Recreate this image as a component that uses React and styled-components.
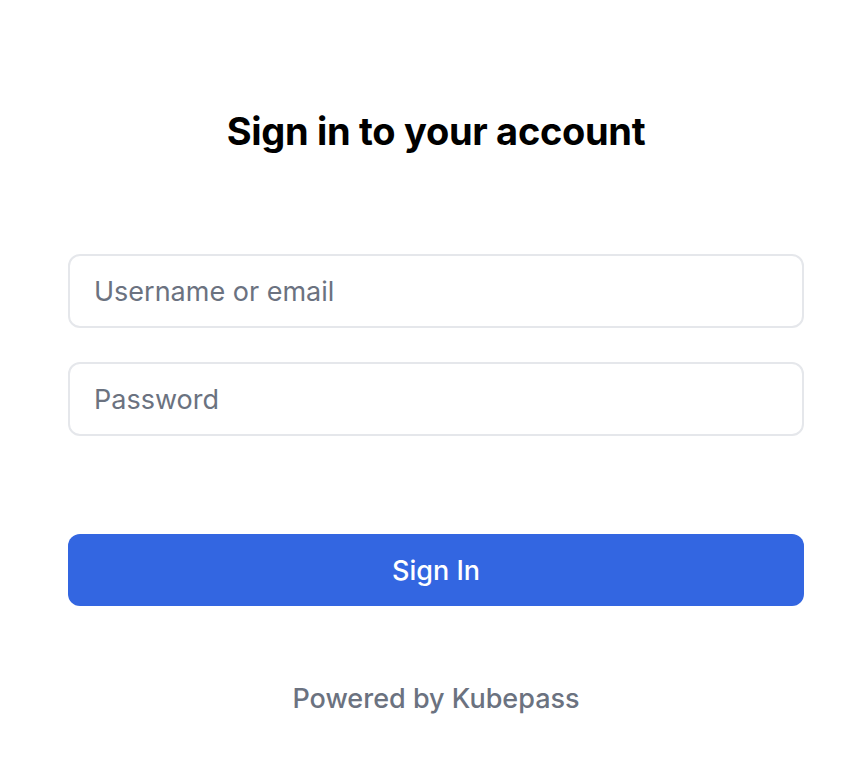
import React from "react";
import styled, { createGlobalStyle } from "styled-components";

const Global = createGlobalStyle`
  html, body { margin: 0; padding: 0; background: #ffffff; }
  body { font-family: Inter, "Noto Sans", "Liberation Sans", sans-serif; }
  * { box-sizing: border-box; }
`;

const Page = styled.div`
  width: 864px;
  min-height: 768px;
  display: flex;
  flex-direction: column;
  align-items: center;
  padding: 105px 0 0 8px;
`;

const Title = styled.h1`
  margin: 0;
  font-size: 38px;
  line-height: 52px;
  font-weight: 700;
  color: #000000;
  letter-spacing: -0.3px;
`;

const Form = styled.form`
  width: 736px;
  margin-top: 97px;
  display: flex;
  flex-direction: column;
`;

const Field = styled.input`
  width: 100%;
  height: 74px;
  border: 2px solid #e5e7eb;
  border-radius: 12px;
  padding: 0 24px;
  font-family: inherit;
  font-size: 27px;
  color: #111827;
  background: #ffffff;
  outline: none;
  margin-bottom: ${(p) => p.$gap || 0}px;
  &::placeholder { color: #6b7280; }
`;

const Button = styled.button`
  width: 100%;
  height: 72px;
  margin-top: 98px;
  border: none;
  border-radius: 12px;
  background: #3366e1;
  color: #ffffff;
  font-family: inherit;
  font-size: 27px;
  font-weight: 500;
  cursor: pointer;
`;

const Footer = styled.p`
  margin: 77px 0 0;
  font-size: 27px;
  line-height: 32px;
  font-weight: 500;
  color: #6b7280;
`;

export default function App() {
  return (
    <>
      <Global />
      <Page>
        <Title>Sign in to your account</Title>
        <Form onSubmit={(e) => e.preventDefault()}>
          <Field type="text" placeholder="Username or email" $gap={34} />
          <Field type="password" placeholder="Password" />
          <Button type="submit">Sign In</Button>
        </Form>
        <Footer>Powered by Kubepass</Footer>
      </Page>
    </>
  );
}
